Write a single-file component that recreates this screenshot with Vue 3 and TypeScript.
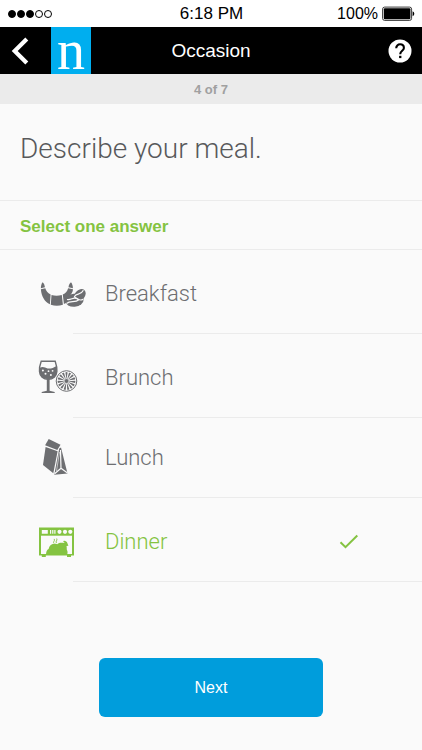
<script setup lang="ts">
import { ref } from 'vue'

interface Meal {
  id: string
  label: string
  compact?: boolean
}

const meals: Meal[] = [
  { id: 'breakfast', label: 'Breakfast' },
  { id: 'brunch', label: 'Brunch' },
  { id: 'lunch', label: 'Lunch', compact: true },
  { id: 'dinner', label: 'Dinner' },
]

const selected = ref('dinner')
const signal = [true, true, true, false, false]

// Spokes of the citrus slice, evenly spaced around its centre.
const spokes = Array.from({ length: 15 }, (_, i) => i * 24)
</script>

<template>
  <div class="screen">
    <div class="status">
      <div class="signal">
        <i v-for="(on, i) in signal" :key="i" class="dot" :class="{ on }"></i>
      </div>
      <span class="clock">6:18 PM</span>
      <div class="power">
        <span class="percent">100%</span>
        <svg width="33" height="16" viewBox="0 0 33 16" aria-hidden="true">
          <rect x="0.6" y="1.1" width="29" height="13.3" rx="2" fill="#fff" stroke="#222" stroke-width="0.9" />
          <rect x="1.8" y="2.3" width="26.6" height="10.9" rx="1" fill="#000" />
          <path d="M30.6 5.3q1.7.7 1.7 2.5t-1.7 2.5z" fill="#000" />
        </svg>
      </div>
    </div>

    <header class="bar">
      <div class="left">
        <button class="icon-btn back" type="button" aria-label="Back">
          <svg width="18" height="28" viewBox="0 0 18 28">
            <path d="M15.8 2 3.7 14l12.1 12" fill="none" stroke="#fff" stroke-width="4.2" />
          </svg>
        </button>
        <span class="logo">n</span>
      </div>
      <h1 class="name">Occasion</h1>
      <button class="icon-btn help" type="button" aria-label="Help">
        <svg width="24" height="24" viewBox="0 0 24 24">
          <circle cx="12" cy="12" r="11.5" fill="#fff" />
          <path d="M8.2 9.2C8.2 6.9 9.9 5.3 12.1 5.3s3.800 1.500 3.800 3.600c0 2.800-3.700 3-3.700 6.300" fill="none" stroke="#000" stroke-width="2.1" />
          <rect x="11.1" y="16.8" width="2.3" height="2.3" fill="#000" />
        </svg>
      </button>
    </header>

    <p class="step">4 of 7</p>

    <form class="form" @submit.prevent>
      <h2 class="title">Describe your meal.</h2>
      <p id="hint" class="hint">Select one answer</p>

      <div class="options" role="radiogroup" aria-labelledby="hint">
        <label
          v-for="meal in meals"
          :key="meal.id"
          class="option"
          :class="{ chosen: selected === meal.id, compact: meal.compact }"
        >
          <input v-model="selected" class="radio" type="radio" name="meal" :value="meal.id" />
          <span class="pic">
            <svg v-if="meal.id === 'breakfast'" width="50" height="36" viewBox="-2 -6 50 36">
              <g fill="currentColor">
                <path d="M2.600.2C1.300 1.900.8 4.200.9 6.300L4.900 5.300C4.800 3.400 4 1.500 2.600.2z" />
                <path d="M.9 7.300 5.300 6.200C5.900 8.600 7.700 11 10.600 12.400L9.900 22.300C4.900 20.100 1.300 14.300.9 7.300z" />
                <path d="M11.500 13q5 1.400 10.300 0l1.100 9.700q-6.100 1.900-12.100 0z" />
                <path d="M22.800 12.600C25.600 11.300 27.500 9 28.100 6.300l4.900 1C32.800 10 31.600 12 29.900 13.300 26.600 15.400 26.700 17.500 26.500 20.700L23.900 22z" />
                <path d="M31 .2C29.500 1.500 28.600 3.400 28.500 5.300l4.400 1C32.900 4.200 32.400 1.900 31 .2z" />
                <ellipse cx="34.3" cy="18.3" rx="9.3" ry="6.500" transform="rotate(-5 34.3 18.3)" />
                <ellipse cx="39.8" cy="13.3" rx="7" ry="5" transform="rotate(-50 39.8 13.3)" />
              </g>
              <g fill="none" stroke="#fafafa" stroke-width="1.2">
                <path d="M27 17.500c4 .8 6.600-2.700 9.400-.9 2.900 1.900 4.600 1.900 6.800.6" />
                <path d="M26.500 21.500c4.500-3.700 8.200.3 12.700-4" />
                <path d="M34.300 14.800c2.500-4.600 6-.6 9.100-6.600M34 14.800l4.700 2.700" />
              </g>
            </svg>

            <svg v-else-if="meal.id === 'brunch'" width="40" height="38" viewBox="0 0 40 38">
              <path d="M3.2 2.2h14c1.100 3.300 2 7 1.700 10.200-.3 4.800-3.900 7.900-8.700 7.900S1.800 17.200 1.500 12.400C1.200 9.200 2 5.500 3.200 2.200z" fill="none" stroke="currentColor" stroke-width="1.4" />
              <path d="M2 8.700c2.900-1.500 5.200 0 7.600.7 2.700.8 5.800-.8 8.900-2.500 1.500 7.500-.7 13.100-8.300 13.100S.6 15.200 2 8.700z" fill="currentColor" />
              <path d="M8.800 19.500h2.800v12.200l5.100 1.200V34H3.700v-1.100l5.100-1.200z" fill="currentColor" />
              <g fill="#fafafa">
                <circle cx="4.9" cy="11.6" r="1" />
                <circle cx="7.5" cy="14.8" r="1" />
                <circle cx="10.5" cy="12.2" r=".9" />
                <circle cx="12.9" cy="16" r="1" />
                <circle cx="14.6" cy="11.8" r=".9" />
              </g>
              <circle cx="28.5" cy="22" r="10.3" fill="none" stroke="currentColor" stroke-width="1" />
              <path
                v-for="angle in spokes"
                :key="angle"
                d="M28.5 20.6 27.400 13.400q1.100-.8 2.200 0z"
                fill="currentColor"
                :transform="`rotate(${angle} 28.5 22)`"
              />
              <circle cx="28.5" cy="22" r="2" fill="currentColor" />
            </svg>

            <svg v-else-if="meal.id === 'lunch'" width="34" height="40" viewBox="-3 0 34 40">
              <path d="M7.700 1.100 19.500 6.700 16.300 12 4.100 7.200z" fill="currentColor" />
              <path d="M4.600 9 16.600 13.300 12.300 35.300 2 27z" fill="currentColor" />
              <path d="M18.200 10.500 20 9.600 26.500 35.500 13.300 36.800z" fill="currentColor" />
              <path d="M19.500 12 20 30.800M20 30.300 13.600 35.700M20 30.300 26.500 35" fill="none" stroke="#fafafa" stroke-width="1.200" />
              <path d="M18.500 14 15.500 33" stroke="#fafafa" stroke-width=".6" />
            </svg>

            <svg v-else width="37" height="31" viewBox="0 0 37 31">
              <path d="M1 .5h35v28H1z" fill="currentColor" />
              <path d="M3.800 28h4v2h-4zM29 28h4v2h-4z" fill="currentColor" />
              <path d="M3 8.700h31V27H3z" fill="#fafafa" />
              <g fill="#fafafa">
                <path d="M3.800 3h6v3.700h-6zM12 3h1.200v3.700H12zM14.200 3h1.200v3.700h-1.200zM16.300 3h1.200v3.700h-1.200z" />
                <circle cx="21.5" cy="4.800" r="2.100" />
                <circle cx="27" cy="4.800" r="2.100" />
                <circle cx="32.300" cy="4.800" r="2.100" />
              </g>
              <path d="M8 27.500c.2-2.900.8-4.700 2.600-5.500.7-4.300 4.800-6.200 8.600-4.800 2.100-1.800 4.600-1.600 7.500-1.100l-1.700-2 1.900-.4 2 1.400 1.500 3.700-1.900.3c.6 2.300-.1 3.400.6 4.200q.9 1.500.2 4.200z" fill="currentColor" />
              <path d="M16 16.400c-1.600-1.500 1.400-2.500.2-4.500M18.500 16c-1.600-1.500 1.400-2.500.2-4.500" fill="none" stroke="currentColor" stroke-width=".9" />
            </svg>
          </span>
          <span class="line">
            <span class="label">{{ meal.label }}</span>
            <svg v-if="selected === meal.id" class="tick" width="20" height="16" viewBox="0 0 20 16" aria-hidden="true">
              <path d="M1.500 8.300 6.500 13.200 18.300 1.500" fill="none" stroke="currentColor" stroke-width="2" />
            </svg>
          </span>
        </label>
      </div>

      <button class="next" type="submit">Next</button>
    </form>
  </div>
</template>

<style>
body {
  background: #fafafa;
}
</style>

<style scoped>
.screen {
  font-family: "Liberation Sans", Arial, sans-serif;
  color: #58595b;
  background: #fafafa;
}

h1,
h2,
p {
  margin: 0;
}

.status,
.bar {
  display: grid;
  grid-template-columns: 1fr auto 1fr;
  align-items: center;
}

.status {
  height: 27px;
  padding: 0 7px 0 8px;
  background: #fff;
  color: #000;
  font-size: 17px;
  line-height: 20px;
}

.signal {
  display: flex;
  gap: 1px;
}

.dot {
  box-sizing: border-box;
  width: 8px;
  height: 8px;
  border: 1px solid #000;
  border-radius: 50%;
}

.dot.on {
  background: #000;
}

.power {
  display: flex;
  align-items: center;
  justify-content: flex-end;
  gap: 4px;
}

.percent {
  font-size: 16px;
}

.bar {
  height: 47px;
  background: #000;
  color: #fff;
}

.left {
  display: flex;
  align-items: center;
  height: 47px;
}

.icon-btn {
  display: flex;
  align-items: center;
  padding: 0;
  border: 0;
  background: none;
  cursor: pointer;
}

.back {
  width: 51px;
  height: 47px;
  padding-left: 11px;
}

.logo {
  width: 40px;
  height: 47px;
  background: #00aeef;
  font-family: "Liberation Serif", "Times New Roman", serif;
  font-size: 56px;
  line-height: 47px;
  text-align: center;
}

.name {
  font-size: 19px;
  line-height: 24px;
  font-weight: 400;
}

.help {
  justify-self: end;
  margin-right: 10px;
}

.step {
  padding-top: 2px;
  background: #ebebeb;
  color: #a0a0a0;
  font-size: 13px;
  line-height: 28px;
  font-weight: 700;
  text-align: center;
}

.form {
  display: flex;
  flex-direction: column;
}

.title {
  padding: 29px 20px 35px;
  border-bottom: 1px solid #ebebeb;
  font-family: Roboto, "Liberation Sans", sans-serif;
  font-size: 28px;
  line-height: 32px;
  font-weight: 300;
}

.hint {
  padding: 4px 20px 0;
  border-bottom: 1px solid #ebebeb;
  color: #84c341;
  font-size: 17px;
  line-height: 44px;
  font-weight: 700;
}

.option {
  position: relative;
  display: flex;
  height: 84px;
  color: #6d6e71;
  cursor: pointer;
}

.option.compact {
  height: 80px;
}

.option.chosen {
  color: #84c341;
}

.radio {
  position: absolute;
  inset: 0;
  width: 100%;
  height: 100%;
  margin: 0;
  opacity: 0;
  cursor: pointer;
}

.pic {
  display: flex;
  align-items: center;
  width: 35px;
  padding: 4px 0 0 38px;
}

.pic svg {
  flex: none;
}

.line {
  display: flex;
  flex: 1;
  align-items: center;
  justify-content: space-between;
  padding: 5px 63px 0 32px;
  border-bottom: 1px solid #ebebeb;
}

.compact .pic {
  padding-top: 0;
}

.compact .line {
  padding-top: 1px;
}

.label {
  font-family: Roboto, "Liberation Sans", sans-serif;
  font-size: 22px;
  line-height: 28px;
  font-weight: 300;
}

.next {
  align-self: center;
  width: 224px;
  height: 59px;
  margin: 76px 0 32px;
  border: 0;
  border-radius: 6px;
  background: #009ddc;
  color: #fff;
  font: 400 16px/20px "Liberation Sans", Arial, sans-serif;
  cursor: pointer;
}
</style>
